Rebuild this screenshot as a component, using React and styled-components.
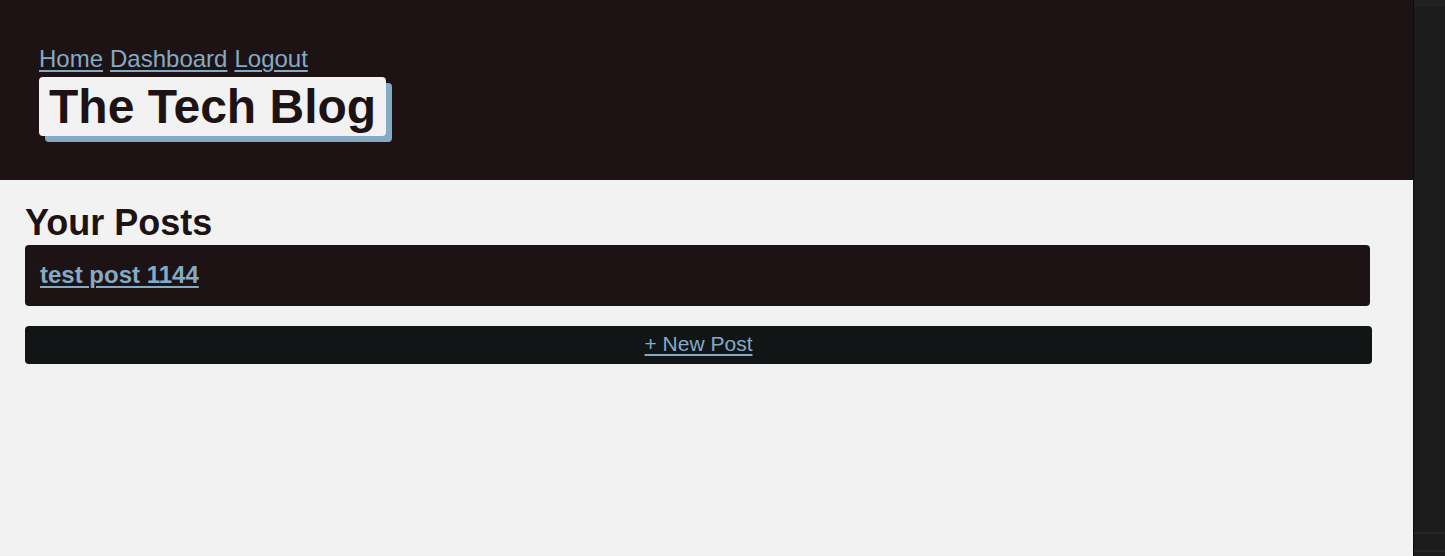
import React from 'react';
import styled, { createGlobalStyle } from 'styled-components';

const GlobalStyle = createGlobalStyle`
  html, body {
    margin: 0;
    padding: 0;
    height: 100%;
    background: #f2f2f2;
  }
  #root {
    height: 100%;
  }
  * {
    box-sizing: border-box;
  }
`;

const Frame = styled.div`
  display: flex;
  height: 556px;
  overflow: hidden;
  font-family: "Liberation Sans", Arial, Helvetica, sans-serif;
`;

const Page = styled.div`
  width: 1413px;
  flex: none;
  background: #f2f2f2;
  color: #1e1314;
`;

const SidePanel = styled.div`
  flex: 1;
  background: #1b1b1b;
  border-left: 1px solid #0c0c0c;
  display: flex;
  flex-direction: column;
  justify-content: space-between;
`;

const PanelBand = styled.div`
  height: ${props => props.h}px;
  background: ${props => props.bg};
`;

const Header = styled.header`
  background: #1e1314;
  height: 180px;
  padding: 44px 39px 0;
`;

const Nav = styled.nav`
  display: flex;
  gap: 7px;
  font-size: 24px;
  line-height: 30px;
`;

const NavLink = styled.a`
  color: #84aac6;
  text-decoration: underline;
  text-underline-offset: 3px;
  text-decoration-thickness: 2px;
`;

const Brand = styled.h1`
  display: inline-block;
  margin: 3px 0 0;
  padding: 2px 10px 2px 10px;
  height: 59px;
  font-size: 48px;
  line-height: 55px;
  font-weight: 700;
  color: #1e1314;
  background: #f2f2f2;
  border-radius: 4px;
  box-shadow: 6px 6px 0 #84aac6;
`;

const Main = styled.main`
  padding: 20px 41px 0 25px;
`;

const Title = styled.h2`
  margin: 0;
  font-size: 36px;
  line-height: 45px;
  font-weight: 700;
  color: #1e1314;
`;

const PostCard = styled.div`
  margin-right: 2px;
  height: 61px;
  background: #1e1314;
  border-radius: 4px;
  padding: 15px 15px 0;
`;

const PostLink = styled.a`
  color: #84aac6;
  font-size: 24px;
  line-height: 30px;
  font-weight: 700;
  text-decoration: underline;
  text-underline-offset: 3px;
  text-decoration-thickness: 2px;
`;

const NewPost = styled.div`
  margin-top: 20px;
  height: 38px;
  background: #111516;
  border-radius: 4px;
  display: flex;
  align-items: center;
  justify-content: center;
  padding-bottom: 3px;
`;

const NewPostLink = styled.a`
  color: #84aac6;
  font-size: 21px;
  line-height: 24px;
  text-decoration: underline;
  text-underline-offset: 3px;
  text-decoration-thickness: 2px;
`;

export default function App() {
  return (
    <>
      <GlobalStyle />
      <Frame>
        <Page>
          <Header>
            <Nav>
              <NavLink href="#">Home</NavLink>
              <NavLink href="#">Dashboard</NavLink>
              <NavLink href="#">Logout</NavLink>
            </Nav>
            <Brand>The Tech Blog</Brand>
          </Header>
          <Main>
            <Title>Your Posts</Title>
            <PostCard>
              <PostLink href="#">test post 1144</PostLink>
            </PostCard>
            <NewPost>
              <NewPostLink href="#">+ New Post</NewPostLink>
            </NewPost>
          </Main>
        </Page>
        <SidePanel>
          <PanelBand h={7} bg="#202020" />
          <div>
            <PanelBand h={2} bg="#262626" />
            <PanelBand h={16} bg="#1b1b1b" />
            <PanelBand h={2} bg="#262626" />
            <PanelBand h={4} bg="#1d1d1d" />
          </div>
        </SidePanel>
      </Frame>
    </>
  );
}
